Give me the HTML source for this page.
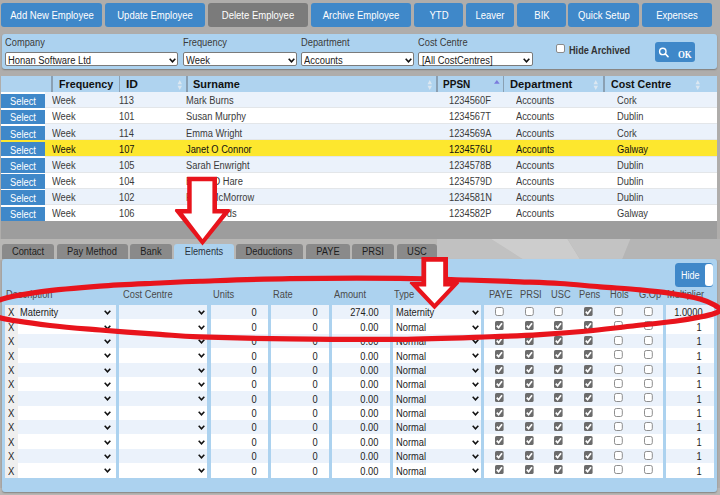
<!DOCTYPE html><html><head><meta charset="utf-8"><style>html,body{margin:0;padding:0;}body{width:720px;height:495px;overflow:hidden;position:relative;background:#afadab;font-family:'Liberation Sans', sans-serif;}</style></head><body>
<svg style="position:absolute;left:0;top:0" width="720" height="495"><rect x="0" y="239" width="720" height="21" fill="#b8b7b5"/><polygon points="437,239 491,239 524,260 437,260" fill="#c1c1c1"/><polygon points="491,239 567.5,239 580.5,260 524,260" fill="#cdcdcd"/><polygon points="567.5,239 630.5,239 622,260 580.5,260" fill="#c3c3c3"/><polygon points="630.5,239 720,239 720,260 622,260" fill="#b5b5b5"/><rect x="0" y="488" width="720" height="7" fill="#b8b7b5"/></svg>
<div style="position:absolute;left:1.00px;top:3.00px;width:101.00px;height:24.00px;background:#3f88c9;border-radius:3px;"></div>
<div style="position:absolute;left:-148.50px;width:400px;text-align:center;top:10.03px;font:400 10px/12px 'Liberation Sans', sans-serif;color:#fff;white-space:nowrap;transform:scaleX(0.95);transform-origin:50% 0;">Add New Employee</div>
<div style="position:absolute;left:105.00px;top:3.00px;width:100.00px;height:24.00px;background:#3f88c9;border-radius:3px;"></div>
<div style="position:absolute;left:-45.00px;width:400px;text-align:center;top:10.03px;font:400 10px/12px 'Liberation Sans', sans-serif;color:#fff;white-space:nowrap;transform:scaleX(0.95);transform-origin:50% 0;">Update Employee</div>
<div style="position:absolute;left:208.00px;top:3.00px;width:100.00px;height:24.00px;background:#7b7b7b;border-radius:3px;"></div>
<div style="position:absolute;left:58.00px;width:400px;text-align:center;top:10.03px;font:400 10px/12px 'Liberation Sans', sans-serif;color:#fff;white-space:nowrap;transform:scaleX(0.95);transform-origin:50% 0;">Delete Employee</div>
<div style="position:absolute;left:311.00px;top:3.00px;width:100.00px;height:24.00px;background:#3f88c9;border-radius:3px;"></div>
<div style="position:absolute;left:161.00px;width:400px;text-align:center;top:10.03px;font:400 10px/12px 'Liberation Sans', sans-serif;color:#fff;white-space:nowrap;transform:scaleX(0.95);transform-origin:50% 0;">Archive Employee</div>
<div style="position:absolute;left:414.00px;top:3.00px;width:49.00px;height:24.00px;background:#3f88c9;border-radius:3px;"></div>
<div style="position:absolute;left:238.50px;width:400px;text-align:center;top:10.03px;font:400 10px/12px 'Liberation Sans', sans-serif;color:#fff;white-space:nowrap;transform:scaleX(0.95);transform-origin:50% 0;">YTD</div>
<div style="position:absolute;left:466.00px;top:3.00px;width:48.00px;height:24.00px;background:#3f88c9;border-radius:3px;"></div>
<div style="position:absolute;left:290.00px;width:400px;text-align:center;top:10.03px;font:400 10px/12px 'Liberation Sans', sans-serif;color:#fff;white-space:nowrap;transform:scaleX(0.95);transform-origin:50% 0;">Leaver</div>
<div style="position:absolute;left:517.00px;top:3.00px;width:49.00px;height:24.00px;background:#3f88c9;border-radius:3px;"></div>
<div style="position:absolute;left:341.50px;width:400px;text-align:center;top:10.03px;font:400 10px/12px 'Liberation Sans', sans-serif;color:#fff;white-space:nowrap;transform:scaleX(0.95);transform-origin:50% 0;">BIK</div>
<div style="position:absolute;left:568.00px;top:3.00px;width:71.00px;height:24.00px;background:#3f88c9;border-radius:3px;"></div>
<div style="position:absolute;left:403.50px;width:400px;text-align:center;top:10.03px;font:400 10px/12px 'Liberation Sans', sans-serif;color:#fff;white-space:nowrap;transform:scaleX(0.95);transform-origin:50% 0;">Quick Setup</div>
<div style="position:absolute;left:642.00px;top:3.00px;width:70.00px;height:24.00px;background:#3f88c9;border-radius:3px;"></div>
<div style="position:absolute;left:477.00px;width:400px;text-align:center;top:10.03px;font:400 10px/12px 'Liberation Sans', sans-serif;color:#fff;white-space:nowrap;transform:scaleX(0.95);transform-origin:50% 0;">Expenses</div>
<div style="position:absolute;left:1.50px;top:34.30px;width:715.50px;height:34.50px;background:#acd2ef;border-radius:3px;box-shadow:0 1px 1.5px rgba(0,0,0,.28);"></div>
<div style="position:absolute;left:5.00px;top:36.83px;font:400 10px/12px 'Liberation Sans', sans-serif;color:#3a3a3a;white-space:nowrap;transform:scaleX(0.93);transform-origin:0 0;">Company</div>
<div style="position:absolute;left:182.50px;top:36.83px;font:400 10px/12px 'Liberation Sans', sans-serif;color:#3a3a3a;white-space:nowrap;transform:scaleX(0.93);transform-origin:0 0;">Frequency</div>
<div style="position:absolute;left:300.80px;top:36.83px;font:400 10px/12px 'Liberation Sans', sans-serif;color:#3a3a3a;white-space:nowrap;transform:scaleX(0.93);transform-origin:0 0;">Department</div>
<div style="position:absolute;left:418.20px;top:36.83px;font:400 10px/12px 'Liberation Sans', sans-serif;color:#3a3a3a;white-space:nowrap;transform:scaleX(0.93);transform-origin:0 0;">Cost Centre</div>
<div style="position:absolute;left:4.70px;top:52.30px;width:173.80px;height:14.10px;background:#fff;box-sizing:border-box;border:1px solid #7a7a7a;border-radius:2px;"></div>
<div style="position:absolute;left:8.30px;top:54.63px;font:400 10px/12px 'Liberation Sans', sans-serif;color:#222;white-space:nowrap;transform:scaleX(0.94);transform-origin:0 0;">Honan Software Ltd</div>
<svg width="7" height="5" viewBox="0 0 7 5" style="position:absolute;left:169.30px;top:57.50px"><path d="M0.7 0.8 L3.5 3.8 L6.3 0.8" fill="none" stroke="#111" stroke-width="1.6"/></svg>
<div style="position:absolute;left:182.50px;top:52.30px;width:114.20px;height:14.10px;background:#fff;box-sizing:border-box;border:1px solid #7a7a7a;border-radius:2px;"></div>
<div style="position:absolute;left:186.10px;top:54.63px;font:400 10px/12px 'Liberation Sans', sans-serif;color:#222;white-space:nowrap;transform:scaleX(0.94);transform-origin:0 0;">Week</div>
<svg width="7" height="5" viewBox="0 0 7 5" style="position:absolute;left:287.50px;top:57.50px"><path d="M0.7 0.8 L3.5 3.8 L6.3 0.8" fill="none" stroke="#111" stroke-width="1.6"/></svg>
<div style="position:absolute;left:300.80px;top:52.30px;width:113.70px;height:14.10px;background:#fff;box-sizing:border-box;border:1px solid #7a7a7a;border-radius:2px;"></div>
<div style="position:absolute;left:304.40px;top:54.63px;font:400 10px/12px 'Liberation Sans', sans-serif;color:#222;white-space:nowrap;transform:scaleX(0.94);transform-origin:0 0;">Accounts</div>
<svg width="7" height="5" viewBox="0 0 7 5" style="position:absolute;left:405.30px;top:57.50px"><path d="M0.7 0.8 L3.5 3.8 L6.3 0.8" fill="none" stroke="#111" stroke-width="1.6"/></svg>
<div style="position:absolute;left:418.20px;top:52.30px;width:114.40px;height:14.10px;background:#fff;box-sizing:border-box;border:1px solid #7a7a7a;border-radius:2px;"></div>
<div style="position:absolute;left:421.80px;top:54.63px;font:400 10px/12px 'Liberation Sans', sans-serif;color:#222;white-space:nowrap;transform:scaleX(0.94);transform-origin:0 0;">[All CostCentres]</div>
<svg width="7" height="5" viewBox="0 0 7 5" style="position:absolute;left:523.40px;top:57.50px"><path d="M0.7 0.8 L3.5 3.8 L6.3 0.8" fill="none" stroke="#111" stroke-width="1.6"/></svg>
<div style="position:absolute;left:556.30px;top:44.40px;width:8.70px;height:8.70px;background:#fff;box-sizing:border-box;border:1px solid #8a8a8a;border-radius:2px;"></div>
<div style="position:absolute;left:568.75px;top:44.83px;font:700 10px/12px 'Liberation Sans', sans-serif;color:#333;white-space:nowrap;transform:scaleX(0.915);transform-origin:0 0;">Hide Archived</div>
<div style="position:absolute;left:655.00px;top:42.20px;width:40.00px;height:20.20px;background:#3f88c9;border-radius:3px;"></div>
<svg style="position:absolute;left:655px;top:42px" width="40" height="21"><circle cx="7.8" cy="9.4" r="3.2" fill="none" stroke="#fff" stroke-width="1.4"/><path d="M10.2 11.8 L13 14.6" stroke="#fff" stroke-width="1.6" stroke-linecap="round"/></svg>
<div style="position:absolute;left:677.50px;top:48.26px;font:700 10.5px/13px 'Liberation Serif', serif;color:#fff;white-space:nowrap;transform:scaleX(0.84);transform-origin:0 0;">OK</div>
<div style="position:absolute;left:1.20px;top:76.00px;width:716.00px;height:163.40px;background:#9d9d9d;"></div>
<div style="position:absolute;left:1.20px;top:76.00px;width:716.00px;height:15.70px;background:#afd3ef;"></div>
<div style="position:absolute;left:51.40px;top:76.00px;width:1.50px;height:15.70px;background:#8aa0b3;"></div>
<div style="position:absolute;left:118.90px;top:76.00px;width:1.50px;height:15.70px;background:#8aa0b3;"></div>
<div style="position:absolute;left:186.00px;top:76.00px;width:1.50px;height:15.70px;background:#8aa0b3;"></div>
<div style="position:absolute;left:436.00px;top:76.00px;width:1.50px;height:15.70px;background:#8aa0b3;"></div>
<div style="position:absolute;left:502.80px;top:76.00px;width:1.50px;height:15.70px;background:#8aa0b3;"></div>
<div style="position:absolute;left:603.30px;top:76.00px;width:1.50px;height:15.70px;background:#8aa0b3;"></div>
<div style="position:absolute;left:58.75px;top:78.63px;font:700 10px/12px 'Liberation Sans', sans-serif;color:#111;white-space:nowrap;transform:scaleX(1.07);transform-origin:0 0;">Frequency</div>
<div style="position:absolute;left:126.10px;top:78.63px;font:700 10px/12px 'Liberation Sans', sans-serif;color:#111;white-space:nowrap;transform:scaleX(1.2);transform-origin:0 0;">ID</div>
<div style="position:absolute;left:192.70px;top:78.63px;font:700 10px/12px 'Liberation Sans', sans-serif;color:#111;white-space:nowrap;transform:scaleX(1.095);transform-origin:0 0;">Surname</div>
<div style="position:absolute;left:443.10px;top:78.63px;font:700 10px/12px 'Liberation Sans', sans-serif;color:#111;white-space:nowrap;transform:scaleX(1.0);transform-origin:0 0;">PPSN</div>
<div style="position:absolute;left:510.30px;top:78.63px;font:700 10px/12px 'Liberation Sans', sans-serif;color:#111;white-space:nowrap;transform:scaleX(1.12);transform-origin:0 0;">Department</div>
<div style="position:absolute;left:610.70px;top:78.63px;font:700 10px/12px 'Liberation Sans', sans-serif;color:#111;white-space:nowrap;transform:scaleX(1.063);transform-origin:0 0;">Cost Centre</div>
<svg style="position:absolute;left:176.50px;top:79.5px" width="6" height="10"><path d="M0.5 4.3 L2.75 0 L5 4.3Z M0.5 5.7 L2.75 10 L5 5.7Z" fill="#dbe7f1"/></svg>
<svg style="position:absolute;left:427.00px;top:79.5px" width="6" height="10"><path d="M0.5 4.3 L2.75 0 L5 4.3Z M0.5 5.7 L2.75 10 L5 5.7Z" fill="#dbe7f1"/></svg>
<svg style="position:absolute;left:593.00px;top:79.5px" width="6" height="10"><path d="M0.5 4.3 L2.75 0 L5 4.3Z M0.5 5.7 L2.75 10 L5 5.7Z" fill="#dbe7f1"/></svg>
<svg style="position:absolute;left:695.00px;top:79.5px" width="6" height="10"><path d="M0.5 4.3 L2.75 0 L5 4.3Z M0.5 5.7 L2.75 10 L5 5.7Z" fill="#dbe7f1"/></svg>
<svg style="position:absolute;left:493.7px;top:80px" width="6" height="4"><path d="M0 3.8 L2.85 0 L5.7 3.8Z" fill="#7b7bdd"/></svg>
<div style="position:absolute;left:1.20px;top:92.00px;width:716.00px;height:16.16px;background:#e3e6e9;"></div>
<div style="position:absolute;left:1.20px;top:92.00px;width:716.00px;height:15.06px;background:#ebf2fb;"></div>
<div style="position:absolute;left:1.20px;top:92.00px;width:43.70px;height:16.16px;background:#ffffff;"></div>
<div style="position:absolute;left:1.20px;top:93.50px;width:43.70px;height:14.46px;background:#3f88c9;"></div>
<div style="position:absolute;left:-176.95px;width:400px;text-align:center;top:96.23px;font:400 10px/12px 'Liberation Sans', sans-serif;color:#fff;white-space:nowrap;transform:scaleX(0.93);transform-origin:50% 0;">Select</div>
<div style="position:absolute;left:51.70px;top:95.33px;font:400 10px/12px 'Liberation Sans', sans-serif;color:#3a3a3a;white-space:nowrap;transform:scaleX(0.93);transform-origin:0 0;">Week</div>
<div style="position:absolute;left:119.00px;top:95.33px;font:400 10px/12px 'Liberation Sans', sans-serif;color:#3a3a3a;white-space:nowrap;transform:scaleX(0.93);transform-origin:0 0;">113</div>
<div style="position:absolute;left:185.70px;top:95.33px;font:400 10px/12px 'Liberation Sans', sans-serif;color:#3a3a3a;white-space:nowrap;transform:scaleX(0.93);transform-origin:0 0;">Mark Burns</div>
<div style="position:absolute;left:449.30px;top:95.33px;font:400 10px/12px 'Liberation Sans', sans-serif;color:#3a3a3a;white-space:nowrap;transform:scaleX(0.93);transform-origin:0 0;">1234560F</div>
<div style="position:absolute;left:516.00px;top:95.33px;font:400 10px/12px 'Liberation Sans', sans-serif;color:#3a3a3a;white-space:nowrap;transform:scaleX(0.93);transform-origin:0 0;">Accounts</div>
<div style="position:absolute;left:616.70px;top:95.33px;font:400 10px/12px 'Liberation Sans', sans-serif;color:#3a3a3a;white-space:nowrap;transform:scaleX(0.93);transform-origin:0 0;">Cork</div>
<div style="position:absolute;left:1.20px;top:108.16px;width:716.00px;height:16.16px;background:#e3e6e9;"></div>
<div style="position:absolute;left:1.20px;top:108.16px;width:716.00px;height:15.06px;background:#ffffff;"></div>
<div style="position:absolute;left:1.20px;top:108.16px;width:43.70px;height:16.16px;background:#ffffff;"></div>
<div style="position:absolute;left:1.20px;top:109.66px;width:43.70px;height:14.46px;background:#3f88c9;"></div>
<div style="position:absolute;left:-176.95px;width:400px;text-align:center;top:112.39px;font:400 10px/12px 'Liberation Sans', sans-serif;color:#fff;white-space:nowrap;transform:scaleX(0.93);transform-origin:50% 0;">Select</div>
<div style="position:absolute;left:51.70px;top:111.49px;font:400 10px/12px 'Liberation Sans', sans-serif;color:#3a3a3a;white-space:nowrap;transform:scaleX(0.93);transform-origin:0 0;">Week</div>
<div style="position:absolute;left:119.00px;top:111.49px;font:400 10px/12px 'Liberation Sans', sans-serif;color:#3a3a3a;white-space:nowrap;transform:scaleX(0.93);transform-origin:0 0;">101</div>
<div style="position:absolute;left:185.70px;top:111.49px;font:400 10px/12px 'Liberation Sans', sans-serif;color:#3a3a3a;white-space:nowrap;transform:scaleX(0.93);transform-origin:0 0;">Susan Murphy</div>
<div style="position:absolute;left:449.30px;top:111.49px;font:400 10px/12px 'Liberation Sans', sans-serif;color:#3a3a3a;white-space:nowrap;transform:scaleX(0.93);transform-origin:0 0;">1234567T</div>
<div style="position:absolute;left:516.00px;top:111.49px;font:400 10px/12px 'Liberation Sans', sans-serif;color:#3a3a3a;white-space:nowrap;transform:scaleX(0.93);transform-origin:0 0;">Accounts</div>
<div style="position:absolute;left:616.70px;top:111.49px;font:400 10px/12px 'Liberation Sans', sans-serif;color:#3a3a3a;white-space:nowrap;transform:scaleX(0.93);transform-origin:0 0;">Dublin</div>
<div style="position:absolute;left:1.20px;top:124.32px;width:716.00px;height:16.16px;background:#e3e6e9;"></div>
<div style="position:absolute;left:1.20px;top:124.32px;width:716.00px;height:15.06px;background:#ebf2fb;"></div>
<div style="position:absolute;left:1.20px;top:124.32px;width:43.70px;height:16.16px;background:#ffffff;"></div>
<div style="position:absolute;left:1.20px;top:125.82px;width:43.70px;height:14.46px;background:#3f88c9;"></div>
<div style="position:absolute;left:-176.95px;width:400px;text-align:center;top:128.55px;font:400 10px/12px 'Liberation Sans', sans-serif;color:#fff;white-space:nowrap;transform:scaleX(0.93);transform-origin:50% 0;">Select</div>
<div style="position:absolute;left:51.70px;top:127.65px;font:400 10px/12px 'Liberation Sans', sans-serif;color:#3a3a3a;white-space:nowrap;transform:scaleX(0.93);transform-origin:0 0;">Week</div>
<div style="position:absolute;left:119.00px;top:127.65px;font:400 10px/12px 'Liberation Sans', sans-serif;color:#3a3a3a;white-space:nowrap;transform:scaleX(0.93);transform-origin:0 0;">114</div>
<div style="position:absolute;left:185.70px;top:127.65px;font:400 10px/12px 'Liberation Sans', sans-serif;color:#3a3a3a;white-space:nowrap;transform:scaleX(0.93);transform-origin:0 0;">Emma Wright</div>
<div style="position:absolute;left:449.30px;top:127.65px;font:400 10px/12px 'Liberation Sans', sans-serif;color:#3a3a3a;white-space:nowrap;transform:scaleX(0.93);transform-origin:0 0;">1234569A</div>
<div style="position:absolute;left:516.00px;top:127.65px;font:400 10px/12px 'Liberation Sans', sans-serif;color:#3a3a3a;white-space:nowrap;transform:scaleX(0.93);transform-origin:0 0;">Accounts</div>
<div style="position:absolute;left:616.70px;top:127.65px;font:400 10px/12px 'Liberation Sans', sans-serif;color:#3a3a3a;white-space:nowrap;transform:scaleX(0.93);transform-origin:0 0;">Cork</div>
<div style="position:absolute;left:1.20px;top:140.48px;width:716.00px;height:16.16px;background:#e3e6e9;"></div>
<div style="position:absolute;left:1.20px;top:140.48px;width:716.00px;height:15.06px;background:#fde72e;"></div>
<div style="position:absolute;left:1.20px;top:140.48px;width:43.70px;height:16.16px;background:#ffffff;"></div>
<div style="position:absolute;left:1.20px;top:140.48px;width:43.70px;height:1.60px;background:#fde72e;"></div>
<div style="position:absolute;left:1.20px;top:141.98px;width:43.70px;height:14.46px;background:#3f88c9;"></div>
<div style="position:absolute;left:-176.95px;width:400px;text-align:center;top:144.71px;font:400 10px/12px 'Liberation Sans', sans-serif;color:#fff;white-space:nowrap;transform:scaleX(0.93);transform-origin:50% 0;">Select</div>
<div style="position:absolute;left:51.70px;top:143.81px;font:400 10px/12px 'Liberation Sans', sans-serif;color:#111;white-space:nowrap;transform:scaleX(0.93);transform-origin:0 0;">Week</div>
<div style="position:absolute;left:119.00px;top:143.81px;font:400 10px/12px 'Liberation Sans', sans-serif;color:#111;white-space:nowrap;transform:scaleX(0.93);transform-origin:0 0;">107</div>
<div style="position:absolute;left:185.70px;top:143.81px;font:400 10px/12px 'Liberation Sans', sans-serif;color:#111;white-space:nowrap;transform:scaleX(0.93);transform-origin:0 0;">Janet O Connor</div>
<div style="position:absolute;left:449.30px;top:143.81px;font:400 10px/12px 'Liberation Sans', sans-serif;color:#111;white-space:nowrap;transform:scaleX(0.93);transform-origin:0 0;">1234576U</div>
<div style="position:absolute;left:516.00px;top:143.81px;font:400 10px/12px 'Liberation Sans', sans-serif;color:#111;white-space:nowrap;transform:scaleX(0.93);transform-origin:0 0;">Accounts</div>
<div style="position:absolute;left:616.70px;top:143.81px;font:400 10px/12px 'Liberation Sans', sans-serif;color:#111;white-space:nowrap;transform:scaleX(0.93);transform-origin:0 0;">Galway</div>
<div style="position:absolute;left:1.20px;top:156.64px;width:716.00px;height:16.16px;background:#e3e6e9;"></div>
<div style="position:absolute;left:1.20px;top:156.64px;width:716.00px;height:15.06px;background:#ebf2fb;"></div>
<div style="position:absolute;left:1.20px;top:156.64px;width:43.70px;height:16.16px;background:#ffffff;"></div>
<div style="position:absolute;left:1.20px;top:158.14px;width:43.70px;height:14.46px;background:#3f88c9;"></div>
<div style="position:absolute;left:-176.95px;width:400px;text-align:center;top:160.87px;font:400 10px/12px 'Liberation Sans', sans-serif;color:#fff;white-space:nowrap;transform:scaleX(0.93);transform-origin:50% 0;">Select</div>
<div style="position:absolute;left:51.70px;top:159.97px;font:400 10px/12px 'Liberation Sans', sans-serif;color:#3a3a3a;white-space:nowrap;transform:scaleX(0.93);transform-origin:0 0;">Week</div>
<div style="position:absolute;left:119.00px;top:159.97px;font:400 10px/12px 'Liberation Sans', sans-serif;color:#3a3a3a;white-space:nowrap;transform:scaleX(0.93);transform-origin:0 0;">105</div>
<div style="position:absolute;left:185.70px;top:159.97px;font:400 10px/12px 'Liberation Sans', sans-serif;color:#3a3a3a;white-space:nowrap;transform:scaleX(0.93);transform-origin:0 0;">Sarah Enwright</div>
<div style="position:absolute;left:449.30px;top:159.97px;font:400 10px/12px 'Liberation Sans', sans-serif;color:#3a3a3a;white-space:nowrap;transform:scaleX(0.93);transform-origin:0 0;">1234578B</div>
<div style="position:absolute;left:516.00px;top:159.97px;font:400 10px/12px 'Liberation Sans', sans-serif;color:#3a3a3a;white-space:nowrap;transform:scaleX(0.93);transform-origin:0 0;">Accounts</div>
<div style="position:absolute;left:616.70px;top:159.97px;font:400 10px/12px 'Liberation Sans', sans-serif;color:#3a3a3a;white-space:nowrap;transform:scaleX(0.93);transform-origin:0 0;">Dublin</div>
<div style="position:absolute;left:1.20px;top:172.80px;width:716.00px;height:16.16px;background:#e3e6e9;"></div>
<div style="position:absolute;left:1.20px;top:172.80px;width:716.00px;height:15.06px;background:#ffffff;"></div>
<div style="position:absolute;left:1.20px;top:172.80px;width:43.70px;height:16.16px;background:#ffffff;"></div>
<div style="position:absolute;left:1.20px;top:174.30px;width:43.70px;height:14.46px;background:#3f88c9;"></div>
<div style="position:absolute;left:-176.95px;width:400px;text-align:center;top:177.03px;font:400 10px/12px 'Liberation Sans', sans-serif;color:#fff;white-space:nowrap;transform:scaleX(0.93);transform-origin:50% 0;">Select</div>
<div style="position:absolute;left:51.70px;top:176.13px;font:400 10px/12px 'Liberation Sans', sans-serif;color:#3a3a3a;white-space:nowrap;transform:scaleX(0.93);transform-origin:0 0;">Week</div>
<div style="position:absolute;left:119.00px;top:176.13px;font:400 10px/12px 'Liberation Sans', sans-serif;color:#3a3a3a;white-space:nowrap;transform:scaleX(0.93);transform-origin:0 0;">104</div>
<div style="position:absolute;left:185.70px;top:176.13px;font:400 10px/12px 'Liberation Sans', sans-serif;color:#3a3a3a;white-space:nowrap;transform:scaleX(0.93);transform-origin:0 0;">Bryan O Hare</div>
<div style="position:absolute;left:449.30px;top:176.13px;font:400 10px/12px 'Liberation Sans', sans-serif;color:#3a3a3a;white-space:nowrap;transform:scaleX(0.93);transform-origin:0 0;">1234579D</div>
<div style="position:absolute;left:516.00px;top:176.13px;font:400 10px/12px 'Liberation Sans', sans-serif;color:#3a3a3a;white-space:nowrap;transform:scaleX(0.93);transform-origin:0 0;">Accounts</div>
<div style="position:absolute;left:616.70px;top:176.13px;font:400 10px/12px 'Liberation Sans', sans-serif;color:#3a3a3a;white-space:nowrap;transform:scaleX(0.93);transform-origin:0 0;">Dublin</div>
<div style="position:absolute;left:1.20px;top:188.96px;width:716.00px;height:16.16px;background:#e3e6e9;"></div>
<div style="position:absolute;left:1.20px;top:188.96px;width:716.00px;height:15.06px;background:#ebf2fb;"></div>
<div style="position:absolute;left:1.20px;top:188.96px;width:43.70px;height:16.16px;background:#ffffff;"></div>
<div style="position:absolute;left:1.20px;top:190.46px;width:43.70px;height:14.46px;background:#3f88c9;"></div>
<div style="position:absolute;left:-176.95px;width:400px;text-align:center;top:193.19px;font:400 10px/12px 'Liberation Sans', sans-serif;color:#fff;white-space:nowrap;transform:scaleX(0.93);transform-origin:50% 0;">Select</div>
<div style="position:absolute;left:51.70px;top:192.29px;font:400 10px/12px 'Liberation Sans', sans-serif;color:#3a3a3a;white-space:nowrap;transform:scaleX(0.93);transform-origin:0 0;">Week</div>
<div style="position:absolute;left:119.00px;top:192.29px;font:400 10px/12px 'Liberation Sans', sans-serif;color:#3a3a3a;white-space:nowrap;transform:scaleX(0.93);transform-origin:0 0;">102</div>
<div style="position:absolute;left:185.70px;top:192.29px;font:400 10px/12px 'Liberation Sans', sans-serif;color:#3a3a3a;white-space:nowrap;transform:scaleX(0.93);transform-origin:0 0;">Peter McMorrow</div>
<div style="position:absolute;left:449.30px;top:192.29px;font:400 10px/12px 'Liberation Sans', sans-serif;color:#3a3a3a;white-space:nowrap;transform:scaleX(0.93);transform-origin:0 0;">1234581N</div>
<div style="position:absolute;left:516.00px;top:192.29px;font:400 10px/12px 'Liberation Sans', sans-serif;color:#3a3a3a;white-space:nowrap;transform:scaleX(0.93);transform-origin:0 0;">Accounts</div>
<div style="position:absolute;left:616.70px;top:192.29px;font:400 10px/12px 'Liberation Sans', sans-serif;color:#3a3a3a;white-space:nowrap;transform:scaleX(0.93);transform-origin:0 0;">Dublin</div>
<div style="position:absolute;left:1.20px;top:205.12px;width:716.00px;height:16.16px;background:#ffffff;"></div>
<div style="position:absolute;left:1.20px;top:205.12px;width:716.00px;height:15.06px;background:#ffffff;"></div>
<div style="position:absolute;left:1.20px;top:205.12px;width:43.70px;height:16.16px;background:#ffffff;"></div>
<div style="position:absolute;left:1.20px;top:206.62px;width:43.70px;height:14.46px;background:#3f88c9;"></div>
<div style="position:absolute;left:-176.95px;width:400px;text-align:center;top:209.35px;font:400 10px/12px 'Liberation Sans', sans-serif;color:#fff;white-space:nowrap;transform:scaleX(0.93);transform-origin:50% 0;">Select</div>
<div style="position:absolute;left:51.70px;top:208.45px;font:400 10px/12px 'Liberation Sans', sans-serif;color:#3a3a3a;white-space:nowrap;transform:scaleX(0.93);transform-origin:0 0;">Week</div>
<div style="position:absolute;left:119.00px;top:208.45px;font:400 10px/12px 'Liberation Sans', sans-serif;color:#3a3a3a;white-space:nowrap;transform:scaleX(0.93);transform-origin:0 0;">106</div>
<div style="position:absolute;left:185.70px;top:208.45px;font:400 10px/12px 'Liberation Sans', sans-serif;color:#3a3a3a;white-space:nowrap;transform:scaleX(0.93);transform-origin:0 0;">Liz Edwards</div>
<div style="position:absolute;left:449.30px;top:208.45px;font:400 10px/12px 'Liberation Sans', sans-serif;color:#3a3a3a;white-space:nowrap;transform:scaleX(0.93);transform-origin:0 0;">1234582P</div>
<div style="position:absolute;left:516.00px;top:208.45px;font:400 10px/12px 'Liberation Sans', sans-serif;color:#3a3a3a;white-space:nowrap;transform:scaleX(0.93);transform-origin:0 0;">Accounts</div>
<div style="position:absolute;left:616.70px;top:208.45px;font:400 10px/12px 'Liberation Sans', sans-serif;color:#3a3a3a;white-space:nowrap;transform:scaleX(0.93);transform-origin:0 0;">Galway</div>
<div style="position:absolute;left:1.70px;top:243.80px;width:52.80px;height:14.80px;background:#8a8a8a;border-radius:3px 3px 0 0;"></div>
<div style="position:absolute;left:-171.90px;width:400px;text-align:center;top:246.23px;font:400 10px/12px 'Liberation Sans', sans-serif;color:#1e1e1e;white-space:nowrap;transform:scaleX(0.935);transform-origin:50% 0;">Contact</div>
<div style="position:absolute;left:56.70px;top:243.80px;width:71.00px;height:14.80px;background:#8a8a8a;border-radius:3px 3px 0 0;"></div>
<div style="position:absolute;left:-107.80px;width:400px;text-align:center;top:246.23px;font:400 10px/12px 'Liberation Sans', sans-serif;color:#1e1e1e;white-space:nowrap;transform:scaleX(0.935);transform-origin:50% 0;">Pay Method</div>
<div style="position:absolute;left:130.00px;top:243.80px;width:42.20px;height:14.80px;background:#8a8a8a;border-radius:3px 3px 0 0;"></div>
<div style="position:absolute;left:-48.90px;width:400px;text-align:center;top:246.23px;font:400 10px/12px 'Liberation Sans', sans-serif;color:#1e1e1e;white-space:nowrap;transform:scaleX(0.935);transform-origin:50% 0;">Bank</div>
<div style="position:absolute;left:173.80px;top:243.60px;width:59.90px;height:18.40px;background:#acd2ef;border-radius:3px 3px 0 0;"></div>
<div style="position:absolute;left:3.75px;width:400px;text-align:center;top:246.23px;font:400 10px/12px 'Liberation Sans', sans-serif;color:#2a3340;white-space:nowrap;transform:scaleX(0.92);transform-origin:50% 0;">Elements</div>
<div style="position:absolute;left:235.60px;top:243.80px;width:67.70px;height:14.80px;background:#8a8a8a;border-radius:3px 3px 0 0;"></div>
<div style="position:absolute;left:69.45px;width:400px;text-align:center;top:246.23px;font:400 10px/12px 'Liberation Sans', sans-serif;color:#1e1e1e;white-space:nowrap;transform:scaleX(0.935);transform-origin:50% 0;">Deductions</div>
<div style="position:absolute;left:305.70px;top:243.80px;width:44.30px;height:14.80px;background:#8a8a8a;border-radius:3px 3px 0 0;"></div>
<div style="position:absolute;left:127.85px;width:400px;text-align:center;top:246.23px;font:400 10px/12px 'Liberation Sans', sans-serif;color:#1e1e1e;white-space:nowrap;transform:scaleX(0.935);transform-origin:50% 0;">PAYE</div>
<div style="position:absolute;left:352.30px;top:243.80px;width:42.00px;height:14.80px;background:#8a8a8a;border-radius:3px 3px 0 0;"></div>
<div style="position:absolute;left:173.30px;width:400px;text-align:center;top:246.23px;font:400 10px/12px 'Liberation Sans', sans-serif;color:#1e1e1e;white-space:nowrap;transform:scaleX(0.935);transform-origin:50% 0;">PRSI</div>
<div style="position:absolute;left:396.70px;top:243.80px;width:40.60px;height:14.80px;background:#8a8a8a;border-radius:3px 3px 0 0;"></div>
<div style="position:absolute;left:217.00px;width:400px;text-align:center;top:246.23px;font:400 10px/12px 'Liberation Sans', sans-serif;color:#1e1e1e;white-space:nowrap;transform:scaleX(0.935);transform-origin:50% 0;">USC</div>
<div style="position:absolute;left:1.70px;top:259.20px;width:715.80px;height:232.50px;background:#acd2ef;border-radius:3px;box-shadow:0 1px 1.5px rgba(0,0,0,.28);"></div>
<div style="position:absolute;left:674.60px;top:262.90px;width:38.70px;height:24.20px;background:#3f88c9;border-radius:3.5px;"></div>
<div style="position:absolute;left:705.00px;top:263.80px;width:7.90px;height:22.40px;background:#fff;border-radius:3px;"></div>
<div style="position:absolute;left:681.00px;top:270.08px;font:400 10px/12px 'Liberation Sans', sans-serif;color:#fff;white-space:nowrap;transform:scaleX(0.9);transform-origin:0 0;">Hide</div>
<div style="position:absolute;left:5.50px;top:289.03px;font:400 10px/12px 'Liberation Sans', sans-serif;color:#4a4a4a;white-space:nowrap;transform:scaleX(0.93);transform-origin:0 0;">Description</div>
<div style="position:absolute;left:122.70px;top:289.03px;font:400 10px/12px 'Liberation Sans', sans-serif;color:#4a4a4a;white-space:nowrap;transform:scaleX(0.93);transform-origin:0 0;">Cost Centre</div>
<div style="position:absolute;left:213.30px;top:289.03px;font:400 10px/12px 'Liberation Sans', sans-serif;color:#4a4a4a;white-space:nowrap;transform:scaleX(0.93);transform-origin:0 0;">Units</div>
<div style="position:absolute;left:273.30px;top:289.03px;font:400 10px/12px 'Liberation Sans', sans-serif;color:#4a4a4a;white-space:nowrap;transform:scaleX(0.93);transform-origin:0 0;">Rate</div>
<div style="position:absolute;left:334.00px;top:289.03px;font:400 10px/12px 'Liberation Sans', sans-serif;color:#4a4a4a;white-space:nowrap;transform:scaleX(0.93);transform-origin:0 0;">Amount</div>
<div style="position:absolute;left:394.00px;top:289.03px;font:400 10px/12px 'Liberation Sans', sans-serif;color:#4a4a4a;white-space:nowrap;transform:scaleX(0.93);transform-origin:0 0;">Type</div>
<div style="position:absolute;left:489.00px;top:289.03px;font:400 10px/12px 'Liberation Sans', sans-serif;color:#4a4a4a;white-space:nowrap;transform:scaleX(0.93);transform-origin:0 0;">PAYE</div>
<div style="position:absolute;left:520.00px;top:289.03px;font:400 10px/12px 'Liberation Sans', sans-serif;color:#4a4a4a;white-space:nowrap;transform:scaleX(0.93);transform-origin:0 0;">PRSI</div>
<div style="position:absolute;left:550.70px;top:289.03px;font:400 10px/12px 'Liberation Sans', sans-serif;color:#4a4a4a;white-space:nowrap;transform:scaleX(0.93);transform-origin:0 0;">USC</div>
<div style="position:absolute;left:579.30px;top:289.03px;font:400 10px/12px 'Liberation Sans', sans-serif;color:#4a4a4a;white-space:nowrap;transform:scaleX(0.93);transform-origin:0 0;">Pens</div>
<div style="position:absolute;left:610.00px;top:289.03px;font:400 10px/12px 'Liberation Sans', sans-serif;color:#4a4a4a;white-space:nowrap;transform:scaleX(0.93);transform-origin:0 0;">Hols</div>
<div style="position:absolute;left:639.30px;top:289.03px;font:400 10px/12px 'Liberation Sans', sans-serif;color:#4a4a4a;white-space:nowrap;transform:scaleX(0.93);transform-origin:0 0;">G.Op</div>
<div style="position:absolute;left:666.70px;top:289.03px;font:400 10px/12px 'Liberation Sans', sans-serif;color:#4a4a4a;white-space:nowrap;transform:scaleX(0.93);transform-origin:0 0;">Multiplier</div>
<div style="position:absolute;left:5.00px;top:305.00px;width:709.20px;height:172.50px;background:#ffffff;"></div>
<div style="position:absolute;left:5.00px;top:305.00px;width:709.20px;height:14.38px;background:#ebf2fb;"></div>
<div style="position:absolute;left:5.00px;top:333.75px;width:709.20px;height:14.38px;background:#ebf2fb;"></div>
<div style="position:absolute;left:5.00px;top:362.50px;width:709.20px;height:14.38px;background:#ebf2fb;"></div>
<div style="position:absolute;left:5.00px;top:391.25px;width:709.20px;height:14.38px;background:#ebf2fb;"></div>
<div style="position:absolute;left:5.00px;top:420.00px;width:709.20px;height:14.38px;background:#ebf2fb;"></div>
<div style="position:absolute;left:5.00px;top:448.75px;width:709.20px;height:14.38px;background:#ebf2fb;"></div>
<div style="position:absolute;left:5.00px;top:305.00px;width:12.80px;height:172.50px;background:#efefef;"></div>
<div style="position:absolute;left:116.00px;top:305.00px;width:3.20px;height:172.50px;background:#acd2ef;"></div>
<div style="position:absolute;left:207.30px;top:305.00px;width:3.30px;height:172.50px;background:#acd2ef;"></div>
<div style="position:absolute;left:267.80px;top:305.00px;width:3.30px;height:172.50px;background:#acd2ef;"></div>
<div style="position:absolute;left:329.30px;top:305.00px;width:3.00px;height:172.50px;background:#acd2ef;"></div>
<div style="position:absolute;left:390.00px;top:305.00px;width:2.70px;height:172.50px;background:#acd2ef;"></div>
<div style="position:absolute;left:481.00px;top:305.00px;width:2.75px;height:172.50px;background:#acd2ef;"></div>
<div style="position:absolute;left:663.30px;top:305.00px;width:2.90px;height:172.50px;background:#acd2ef;"></div>
<div style="position:absolute;left:7.80px;top:307.43px;font:400 10px/12px 'Liberation Sans', sans-serif;color:#222;white-space:nowrap;transform:scaleX(0.95);transform-origin:0 0;">X</div>
<div style="position:absolute;left:19.60px;top:307.43px;font:400 10px/12px 'Liberation Sans', sans-serif;color:#222;white-space:nowrap;transform:scaleX(0.93);transform-origin:0 0;">Maternity</div>
<svg width="7" height="5" viewBox="0 0 7 5" style="position:absolute;left:104.00px;top:310.20px"><path d="M0.7 0.8 L3.5 3.8 L6.3 0.8" fill="none" stroke="#111" stroke-width="1.6"/></svg>
<svg width="7" height="5" viewBox="0 0 7 5" style="position:absolute;left:198.30px;top:310.20px"><path d="M0.7 0.8 L3.5 3.8 L6.3 0.8" fill="none" stroke="#111" stroke-width="1.6"/></svg>
<div style="position:absolute;right:463.10px;top:307.43px;font:400 10px/12px 'Liberation Sans', sans-serif;color:#222;white-space:nowrap;transform:scaleX(0.93);transform-origin:100% 0;">0</div>
<div style="position:absolute;right:402.70px;top:307.43px;font:400 10px/12px 'Liberation Sans', sans-serif;color:#222;white-space:nowrap;transform:scaleX(0.93);transform-origin:100% 0;">0</div>
<div style="position:absolute;right:341.70px;top:307.43px;font:400 10px/12px 'Liberation Sans', sans-serif;color:#222;white-space:nowrap;transform:scaleX(0.93);transform-origin:100% 0;">274.00</div>
<div style="position:absolute;left:396.00px;top:307.43px;font:400 10px/12px 'Liberation Sans', sans-serif;color:#222;white-space:nowrap;transform:scaleX(0.93);transform-origin:0 0;">Maternity</div>
<svg width="7" height="5" viewBox="0 0 7 5" style="position:absolute;left:472.00px;top:310.20px"><path d="M0.7 0.8 L3.5 3.8 L6.3 0.8" fill="none" stroke="#111" stroke-width="1.6"/></svg>
<div style="position:absolute;right:17.30px;top:307.43px;font:400 10px/12px 'Liberation Sans', sans-serif;color:#222;white-space:nowrap;transform:scaleX(0.93);transform-origin:100% 0;">1.0000</div>
<svg style="position:absolute;left:494.90px;top:307.10px" width="9" height="9"><rect x="0.5" y="0.5" width="7.8" height="8" rx="1.8" fill="#fff" stroke="#8e8e8e" stroke-width="1"/></svg>
<svg style="position:absolute;left:524.60px;top:307.10px" width="9" height="9"><rect x="0.5" y="0.5" width="7.8" height="8" rx="1.8" fill="#fff" stroke="#8e8e8e" stroke-width="1"/></svg>
<svg style="position:absolute;left:554.30px;top:307.10px" width="9" height="9"><rect x="0.5" y="0.5" width="7.8" height="8" rx="1.8" fill="#fff" stroke="#8e8e8e" stroke-width="1"/></svg>
<svg style="position:absolute;left:584.00px;top:307.10px" width="9" height="9"><rect x="0" y="0" width="8.6" height="9" rx="1.6" fill="#6b6b6b"/><path d="M1.8 4.6 L3.6 6.7 L7 2.2" fill="none" stroke="#fff" stroke-width="1.7"/></svg>
<svg style="position:absolute;left:614.20px;top:307.10px" width="9" height="9"><rect x="0.5" y="0.5" width="7.8" height="8" rx="1.8" fill="#fff" stroke="#8e8e8e" stroke-width="1"/></svg>
<svg style="position:absolute;left:644.00px;top:307.10px" width="9" height="9"><rect x="0.5" y="0.5" width="7.8" height="8" rx="1.8" fill="#fff" stroke="#8e8e8e" stroke-width="1"/></svg>
<div style="position:absolute;left:7.80px;top:321.81px;font:400 10px/12px 'Liberation Sans', sans-serif;color:#222;white-space:nowrap;transform:scaleX(0.95);transform-origin:0 0;">X</div>
<svg width="7" height="5" viewBox="0 0 7 5" style="position:absolute;left:104.00px;top:324.57px"><path d="M0.7 0.8 L3.5 3.8 L6.3 0.8" fill="none" stroke="#111" stroke-width="1.6"/></svg>
<svg width="7" height="5" viewBox="0 0 7 5" style="position:absolute;left:198.30px;top:324.57px"><path d="M0.7 0.8 L3.5 3.8 L6.3 0.8" fill="none" stroke="#111" stroke-width="1.6"/></svg>
<div style="position:absolute;right:463.10px;top:321.81px;font:400 10px/12px 'Liberation Sans', sans-serif;color:#222;white-space:nowrap;transform:scaleX(0.93);transform-origin:100% 0;">0</div>
<div style="position:absolute;right:402.70px;top:321.81px;font:400 10px/12px 'Liberation Sans', sans-serif;color:#222;white-space:nowrap;transform:scaleX(0.93);transform-origin:100% 0;">0</div>
<div style="position:absolute;right:341.70px;top:321.81px;font:400 10px/12px 'Liberation Sans', sans-serif;color:#222;white-space:nowrap;transform:scaleX(0.93);transform-origin:100% 0;">0.00</div>
<div style="position:absolute;left:396.00px;top:321.81px;font:400 10px/12px 'Liberation Sans', sans-serif;color:#222;white-space:nowrap;transform:scaleX(0.93);transform-origin:0 0;">Normal</div>
<svg width="7" height="5" viewBox="0 0 7 5" style="position:absolute;left:472.00px;top:324.57px"><path d="M0.7 0.8 L3.5 3.8 L6.3 0.8" fill="none" stroke="#111" stroke-width="1.6"/></svg>
<div style="position:absolute;right:18.30px;top:321.81px;font:400 10px/12px 'Liberation Sans', sans-serif;color:#222;white-space:nowrap;transform:scaleX(0.93);transform-origin:100% 0;">1</div>
<svg style="position:absolute;left:494.90px;top:321.48px" width="9" height="9"><rect x="0" y="0" width="8.6" height="9" rx="1.6" fill="#6b6b6b"/><path d="M1.8 4.6 L3.6 6.7 L7 2.2" fill="none" stroke="#fff" stroke-width="1.7"/></svg>
<svg style="position:absolute;left:524.60px;top:321.48px" width="9" height="9"><rect x="0" y="0" width="8.6" height="9" rx="1.6" fill="#6b6b6b"/><path d="M1.8 4.6 L3.6 6.7 L7 2.2" fill="none" stroke="#fff" stroke-width="1.7"/></svg>
<svg style="position:absolute;left:554.30px;top:321.48px" width="9" height="9"><rect x="0" y="0" width="8.6" height="9" rx="1.6" fill="#6b6b6b"/><path d="M1.8 4.6 L3.6 6.7 L7 2.2" fill="none" stroke="#fff" stroke-width="1.7"/></svg>
<svg style="position:absolute;left:584.00px;top:321.48px" width="9" height="9"><rect x="0" y="0" width="8.6" height="9" rx="1.6" fill="#6b6b6b"/><path d="M1.8 4.6 L3.6 6.7 L7 2.2" fill="none" stroke="#fff" stroke-width="1.7"/></svg>
<svg style="position:absolute;left:614.20px;top:321.48px" width="9" height="9"><rect x="0.5" y="0.5" width="7.8" height="8" rx="1.8" fill="#fff" stroke="#8e8e8e" stroke-width="1"/></svg>
<svg style="position:absolute;left:644.00px;top:321.48px" width="9" height="9"><rect x="0.5" y="0.5" width="7.8" height="8" rx="1.8" fill="#fff" stroke="#8e8e8e" stroke-width="1"/></svg>
<div style="position:absolute;left:7.80px;top:336.18px;font:400 10px/12px 'Liberation Sans', sans-serif;color:#222;white-space:nowrap;transform:scaleX(0.95);transform-origin:0 0;">X</div>
<svg width="7" height="5" viewBox="0 0 7 5" style="position:absolute;left:104.00px;top:338.95px"><path d="M0.7 0.8 L3.5 3.8 L6.3 0.8" fill="none" stroke="#111" stroke-width="1.6"/></svg>
<svg width="7" height="5" viewBox="0 0 7 5" style="position:absolute;left:198.30px;top:338.95px"><path d="M0.7 0.8 L3.5 3.8 L6.3 0.8" fill="none" stroke="#111" stroke-width="1.6"/></svg>
<div style="position:absolute;right:463.10px;top:336.18px;font:400 10px/12px 'Liberation Sans', sans-serif;color:#222;white-space:nowrap;transform:scaleX(0.93);transform-origin:100% 0;">0</div>
<div style="position:absolute;right:402.70px;top:336.18px;font:400 10px/12px 'Liberation Sans', sans-serif;color:#222;white-space:nowrap;transform:scaleX(0.93);transform-origin:100% 0;">0</div>
<div style="position:absolute;right:341.70px;top:336.18px;font:400 10px/12px 'Liberation Sans', sans-serif;color:#222;white-space:nowrap;transform:scaleX(0.93);transform-origin:100% 0;">0.00</div>
<div style="position:absolute;left:396.00px;top:336.18px;font:400 10px/12px 'Liberation Sans', sans-serif;color:#222;white-space:nowrap;transform:scaleX(0.93);transform-origin:0 0;">Normal</div>
<svg width="7" height="5" viewBox="0 0 7 5" style="position:absolute;left:472.00px;top:338.95px"><path d="M0.7 0.8 L3.5 3.8 L6.3 0.8" fill="none" stroke="#111" stroke-width="1.6"/></svg>
<div style="position:absolute;right:18.30px;top:336.18px;font:400 10px/12px 'Liberation Sans', sans-serif;color:#222;white-space:nowrap;transform:scaleX(0.93);transform-origin:100% 0;">1</div>
<svg style="position:absolute;left:494.90px;top:335.85px" width="9" height="9"><rect x="0" y="0" width="8.6" height="9" rx="1.6" fill="#6b6b6b"/><path d="M1.8 4.6 L3.6 6.7 L7 2.2" fill="none" stroke="#fff" stroke-width="1.7"/></svg>
<svg style="position:absolute;left:524.60px;top:335.85px" width="9" height="9"><rect x="0" y="0" width="8.6" height="9" rx="1.6" fill="#6b6b6b"/><path d="M1.8 4.6 L3.6 6.7 L7 2.2" fill="none" stroke="#fff" stroke-width="1.7"/></svg>
<svg style="position:absolute;left:554.30px;top:335.85px" width="9" height="9"><rect x="0" y="0" width="8.6" height="9" rx="1.6" fill="#6b6b6b"/><path d="M1.8 4.6 L3.6 6.7 L7 2.2" fill="none" stroke="#fff" stroke-width="1.7"/></svg>
<svg style="position:absolute;left:584.00px;top:335.85px" width="9" height="9"><rect x="0" y="0" width="8.6" height="9" rx="1.6" fill="#6b6b6b"/><path d="M1.8 4.6 L3.6 6.7 L7 2.2" fill="none" stroke="#fff" stroke-width="1.7"/></svg>
<svg style="position:absolute;left:614.20px;top:335.85px" width="9" height="9"><rect x="0.5" y="0.5" width="7.8" height="8" rx="1.8" fill="#fff" stroke="#8e8e8e" stroke-width="1"/></svg>
<svg style="position:absolute;left:644.00px;top:335.85px" width="9" height="9"><rect x="0.5" y="0.5" width="7.8" height="8" rx="1.8" fill="#fff" stroke="#8e8e8e" stroke-width="1"/></svg>
<div style="position:absolute;left:7.80px;top:350.56px;font:400 10px/12px 'Liberation Sans', sans-serif;color:#222;white-space:nowrap;transform:scaleX(0.95);transform-origin:0 0;">X</div>
<svg width="7" height="5" viewBox="0 0 7 5" style="position:absolute;left:104.00px;top:353.32px"><path d="M0.7 0.8 L3.5 3.8 L6.3 0.8" fill="none" stroke="#111" stroke-width="1.6"/></svg>
<svg width="7" height="5" viewBox="0 0 7 5" style="position:absolute;left:198.30px;top:353.32px"><path d="M0.7 0.8 L3.5 3.8 L6.3 0.8" fill="none" stroke="#111" stroke-width="1.6"/></svg>
<div style="position:absolute;right:463.10px;top:350.56px;font:400 10px/12px 'Liberation Sans', sans-serif;color:#222;white-space:nowrap;transform:scaleX(0.93);transform-origin:100% 0;">0</div>
<div style="position:absolute;right:402.70px;top:350.56px;font:400 10px/12px 'Liberation Sans', sans-serif;color:#222;white-space:nowrap;transform:scaleX(0.93);transform-origin:100% 0;">0</div>
<div style="position:absolute;right:341.70px;top:350.56px;font:400 10px/12px 'Liberation Sans', sans-serif;color:#222;white-space:nowrap;transform:scaleX(0.93);transform-origin:100% 0;">0.00</div>
<div style="position:absolute;left:396.00px;top:350.56px;font:400 10px/12px 'Liberation Sans', sans-serif;color:#222;white-space:nowrap;transform:scaleX(0.93);transform-origin:0 0;">Normal</div>
<svg width="7" height="5" viewBox="0 0 7 5" style="position:absolute;left:472.00px;top:353.32px"><path d="M0.7 0.8 L3.5 3.8 L6.3 0.8" fill="none" stroke="#111" stroke-width="1.6"/></svg>
<div style="position:absolute;right:18.30px;top:350.56px;font:400 10px/12px 'Liberation Sans', sans-serif;color:#222;white-space:nowrap;transform:scaleX(0.93);transform-origin:100% 0;">1</div>
<svg style="position:absolute;left:494.90px;top:350.23px" width="9" height="9"><rect x="0" y="0" width="8.6" height="9" rx="1.6" fill="#6b6b6b"/><path d="M1.8 4.6 L3.6 6.7 L7 2.2" fill="none" stroke="#fff" stroke-width="1.7"/></svg>
<svg style="position:absolute;left:524.60px;top:350.23px" width="9" height="9"><rect x="0" y="0" width="8.6" height="9" rx="1.6" fill="#6b6b6b"/><path d="M1.8 4.6 L3.6 6.7 L7 2.2" fill="none" stroke="#fff" stroke-width="1.7"/></svg>
<svg style="position:absolute;left:554.30px;top:350.23px" width="9" height="9"><rect x="0" y="0" width="8.6" height="9" rx="1.6" fill="#6b6b6b"/><path d="M1.8 4.6 L3.6 6.7 L7 2.2" fill="none" stroke="#fff" stroke-width="1.7"/></svg>
<svg style="position:absolute;left:584.00px;top:350.23px" width="9" height="9"><rect x="0" y="0" width="8.6" height="9" rx="1.6" fill="#6b6b6b"/><path d="M1.8 4.6 L3.6 6.7 L7 2.2" fill="none" stroke="#fff" stroke-width="1.7"/></svg>
<svg style="position:absolute;left:614.20px;top:350.23px" width="9" height="9"><rect x="0.5" y="0.5" width="7.8" height="8" rx="1.8" fill="#fff" stroke="#8e8e8e" stroke-width="1"/></svg>
<svg style="position:absolute;left:644.00px;top:350.23px" width="9" height="9"><rect x="0.5" y="0.5" width="7.8" height="8" rx="1.8" fill="#fff" stroke="#8e8e8e" stroke-width="1"/></svg>
<div style="position:absolute;left:7.80px;top:364.93px;font:400 10px/12px 'Liberation Sans', sans-serif;color:#222;white-space:nowrap;transform:scaleX(0.95);transform-origin:0 0;">X</div>
<svg width="7" height="5" viewBox="0 0 7 5" style="position:absolute;left:104.00px;top:367.70px"><path d="M0.7 0.8 L3.5 3.8 L6.3 0.8" fill="none" stroke="#111" stroke-width="1.6"/></svg>
<svg width="7" height="5" viewBox="0 0 7 5" style="position:absolute;left:198.30px;top:367.70px"><path d="M0.7 0.8 L3.5 3.8 L6.3 0.8" fill="none" stroke="#111" stroke-width="1.6"/></svg>
<div style="position:absolute;right:463.10px;top:364.93px;font:400 10px/12px 'Liberation Sans', sans-serif;color:#222;white-space:nowrap;transform:scaleX(0.93);transform-origin:100% 0;">0</div>
<div style="position:absolute;right:402.70px;top:364.93px;font:400 10px/12px 'Liberation Sans', sans-serif;color:#222;white-space:nowrap;transform:scaleX(0.93);transform-origin:100% 0;">0</div>
<div style="position:absolute;right:341.70px;top:364.93px;font:400 10px/12px 'Liberation Sans', sans-serif;color:#222;white-space:nowrap;transform:scaleX(0.93);transform-origin:100% 0;">0.00</div>
<div style="position:absolute;left:396.00px;top:364.93px;font:400 10px/12px 'Liberation Sans', sans-serif;color:#222;white-space:nowrap;transform:scaleX(0.93);transform-origin:0 0;">Normal</div>
<svg width="7" height="5" viewBox="0 0 7 5" style="position:absolute;left:472.00px;top:367.70px"><path d="M0.7 0.8 L3.5 3.8 L6.3 0.8" fill="none" stroke="#111" stroke-width="1.6"/></svg>
<div style="position:absolute;right:18.30px;top:364.93px;font:400 10px/12px 'Liberation Sans', sans-serif;color:#222;white-space:nowrap;transform:scaleX(0.93);transform-origin:100% 0;">1</div>
<svg style="position:absolute;left:494.90px;top:364.60px" width="9" height="9"><rect x="0" y="0" width="8.6" height="9" rx="1.6" fill="#6b6b6b"/><path d="M1.8 4.6 L3.6 6.7 L7 2.2" fill="none" stroke="#fff" stroke-width="1.7"/></svg>
<svg style="position:absolute;left:524.60px;top:364.60px" width="9" height="9"><rect x="0" y="0" width="8.6" height="9" rx="1.6" fill="#6b6b6b"/><path d="M1.8 4.6 L3.6 6.7 L7 2.2" fill="none" stroke="#fff" stroke-width="1.7"/></svg>
<svg style="position:absolute;left:554.30px;top:364.60px" width="9" height="9"><rect x="0" y="0" width="8.6" height="9" rx="1.6" fill="#6b6b6b"/><path d="M1.8 4.6 L3.6 6.7 L7 2.2" fill="none" stroke="#fff" stroke-width="1.7"/></svg>
<svg style="position:absolute;left:584.00px;top:364.60px" width="9" height="9"><rect x="0" y="0" width="8.6" height="9" rx="1.6" fill="#6b6b6b"/><path d="M1.8 4.6 L3.6 6.7 L7 2.2" fill="none" stroke="#fff" stroke-width="1.7"/></svg>
<svg style="position:absolute;left:614.20px;top:364.60px" width="9" height="9"><rect x="0.5" y="0.5" width="7.8" height="8" rx="1.8" fill="#fff" stroke="#8e8e8e" stroke-width="1"/></svg>
<svg style="position:absolute;left:644.00px;top:364.60px" width="9" height="9"><rect x="0.5" y="0.5" width="7.8" height="8" rx="1.8" fill="#fff" stroke="#8e8e8e" stroke-width="1"/></svg>
<div style="position:absolute;left:7.80px;top:379.31px;font:400 10px/12px 'Liberation Sans', sans-serif;color:#222;white-space:nowrap;transform:scaleX(0.95);transform-origin:0 0;">X</div>
<svg width="7" height="5" viewBox="0 0 7 5" style="position:absolute;left:104.00px;top:382.07px"><path d="M0.7 0.8 L3.5 3.8 L6.3 0.8" fill="none" stroke="#111" stroke-width="1.6"/></svg>
<svg width="7" height="5" viewBox="0 0 7 5" style="position:absolute;left:198.30px;top:382.07px"><path d="M0.7 0.8 L3.5 3.8 L6.3 0.8" fill="none" stroke="#111" stroke-width="1.6"/></svg>
<div style="position:absolute;right:463.10px;top:379.31px;font:400 10px/12px 'Liberation Sans', sans-serif;color:#222;white-space:nowrap;transform:scaleX(0.93);transform-origin:100% 0;">0</div>
<div style="position:absolute;right:402.70px;top:379.31px;font:400 10px/12px 'Liberation Sans', sans-serif;color:#222;white-space:nowrap;transform:scaleX(0.93);transform-origin:100% 0;">0</div>
<div style="position:absolute;right:341.70px;top:379.31px;font:400 10px/12px 'Liberation Sans', sans-serif;color:#222;white-space:nowrap;transform:scaleX(0.93);transform-origin:100% 0;">0.00</div>
<div style="position:absolute;left:396.00px;top:379.31px;font:400 10px/12px 'Liberation Sans', sans-serif;color:#222;white-space:nowrap;transform:scaleX(0.93);transform-origin:0 0;">Normal</div>
<svg width="7" height="5" viewBox="0 0 7 5" style="position:absolute;left:472.00px;top:382.07px"><path d="M0.7 0.8 L3.5 3.8 L6.3 0.8" fill="none" stroke="#111" stroke-width="1.6"/></svg>
<div style="position:absolute;right:18.30px;top:379.31px;font:400 10px/12px 'Liberation Sans', sans-serif;color:#222;white-space:nowrap;transform:scaleX(0.93);transform-origin:100% 0;">1</div>
<svg style="position:absolute;left:494.90px;top:378.98px" width="9" height="9"><rect x="0" y="0" width="8.6" height="9" rx="1.6" fill="#6b6b6b"/><path d="M1.8 4.6 L3.6 6.7 L7 2.2" fill="none" stroke="#fff" stroke-width="1.7"/></svg>
<svg style="position:absolute;left:524.60px;top:378.98px" width="9" height="9"><rect x="0" y="0" width="8.6" height="9" rx="1.6" fill="#6b6b6b"/><path d="M1.8 4.6 L3.6 6.7 L7 2.2" fill="none" stroke="#fff" stroke-width="1.7"/></svg>
<svg style="position:absolute;left:554.30px;top:378.98px" width="9" height="9"><rect x="0" y="0" width="8.6" height="9" rx="1.6" fill="#6b6b6b"/><path d="M1.8 4.6 L3.6 6.7 L7 2.2" fill="none" stroke="#fff" stroke-width="1.7"/></svg>
<svg style="position:absolute;left:584.00px;top:378.98px" width="9" height="9"><rect x="0" y="0" width="8.6" height="9" rx="1.6" fill="#6b6b6b"/><path d="M1.8 4.6 L3.6 6.7 L7 2.2" fill="none" stroke="#fff" stroke-width="1.7"/></svg>
<svg style="position:absolute;left:614.20px;top:378.98px" width="9" height="9"><rect x="0.5" y="0.5" width="7.8" height="8" rx="1.8" fill="#fff" stroke="#8e8e8e" stroke-width="1"/></svg>
<svg style="position:absolute;left:644.00px;top:378.98px" width="9" height="9"><rect x="0.5" y="0.5" width="7.8" height="8" rx="1.8" fill="#fff" stroke="#8e8e8e" stroke-width="1"/></svg>
<div style="position:absolute;left:7.80px;top:393.68px;font:400 10px/12px 'Liberation Sans', sans-serif;color:#222;white-space:nowrap;transform:scaleX(0.95);transform-origin:0 0;">X</div>
<svg width="7" height="5" viewBox="0 0 7 5" style="position:absolute;left:104.00px;top:396.45px"><path d="M0.7 0.8 L3.5 3.8 L6.3 0.8" fill="none" stroke="#111" stroke-width="1.6"/></svg>
<svg width="7" height="5" viewBox="0 0 7 5" style="position:absolute;left:198.30px;top:396.45px"><path d="M0.7 0.8 L3.5 3.8 L6.3 0.8" fill="none" stroke="#111" stroke-width="1.6"/></svg>
<div style="position:absolute;right:463.10px;top:393.68px;font:400 10px/12px 'Liberation Sans', sans-serif;color:#222;white-space:nowrap;transform:scaleX(0.93);transform-origin:100% 0;">0</div>
<div style="position:absolute;right:402.70px;top:393.68px;font:400 10px/12px 'Liberation Sans', sans-serif;color:#222;white-space:nowrap;transform:scaleX(0.93);transform-origin:100% 0;">0</div>
<div style="position:absolute;right:341.70px;top:393.68px;font:400 10px/12px 'Liberation Sans', sans-serif;color:#222;white-space:nowrap;transform:scaleX(0.93);transform-origin:100% 0;">0.00</div>
<div style="position:absolute;left:396.00px;top:393.68px;font:400 10px/12px 'Liberation Sans', sans-serif;color:#222;white-space:nowrap;transform:scaleX(0.93);transform-origin:0 0;">Normal</div>
<svg width="7" height="5" viewBox="0 0 7 5" style="position:absolute;left:472.00px;top:396.45px"><path d="M0.7 0.8 L3.5 3.8 L6.3 0.8" fill="none" stroke="#111" stroke-width="1.6"/></svg>
<div style="position:absolute;right:18.30px;top:393.68px;font:400 10px/12px 'Liberation Sans', sans-serif;color:#222;white-space:nowrap;transform:scaleX(0.93);transform-origin:100% 0;">1</div>
<svg style="position:absolute;left:494.90px;top:393.35px" width="9" height="9"><rect x="0" y="0" width="8.6" height="9" rx="1.6" fill="#6b6b6b"/><path d="M1.8 4.6 L3.6 6.7 L7 2.2" fill="none" stroke="#fff" stroke-width="1.7"/></svg>
<svg style="position:absolute;left:524.60px;top:393.35px" width="9" height="9"><rect x="0" y="0" width="8.6" height="9" rx="1.6" fill="#6b6b6b"/><path d="M1.8 4.6 L3.6 6.7 L7 2.2" fill="none" stroke="#fff" stroke-width="1.7"/></svg>
<svg style="position:absolute;left:554.30px;top:393.35px" width="9" height="9"><rect x="0" y="0" width="8.6" height="9" rx="1.6" fill="#6b6b6b"/><path d="M1.8 4.6 L3.6 6.7 L7 2.2" fill="none" stroke="#fff" stroke-width="1.7"/></svg>
<svg style="position:absolute;left:584.00px;top:393.35px" width="9" height="9"><rect x="0" y="0" width="8.6" height="9" rx="1.6" fill="#6b6b6b"/><path d="M1.8 4.6 L3.6 6.7 L7 2.2" fill="none" stroke="#fff" stroke-width="1.7"/></svg>
<svg style="position:absolute;left:614.20px;top:393.35px" width="9" height="9"><rect x="0.5" y="0.5" width="7.8" height="8" rx="1.8" fill="#fff" stroke="#8e8e8e" stroke-width="1"/></svg>
<svg style="position:absolute;left:644.00px;top:393.35px" width="9" height="9"><rect x="0.5" y="0.5" width="7.8" height="8" rx="1.8" fill="#fff" stroke="#8e8e8e" stroke-width="1"/></svg>
<div style="position:absolute;left:7.80px;top:408.06px;font:400 10px/12px 'Liberation Sans', sans-serif;color:#222;white-space:nowrap;transform:scaleX(0.95);transform-origin:0 0;">X</div>
<svg width="7" height="5" viewBox="0 0 7 5" style="position:absolute;left:104.00px;top:410.82px"><path d="M0.7 0.8 L3.5 3.8 L6.3 0.8" fill="none" stroke="#111" stroke-width="1.6"/></svg>
<svg width="7" height="5" viewBox="0 0 7 5" style="position:absolute;left:198.30px;top:410.82px"><path d="M0.7 0.8 L3.5 3.8 L6.3 0.8" fill="none" stroke="#111" stroke-width="1.6"/></svg>
<div style="position:absolute;right:463.10px;top:408.06px;font:400 10px/12px 'Liberation Sans', sans-serif;color:#222;white-space:nowrap;transform:scaleX(0.93);transform-origin:100% 0;">0</div>
<div style="position:absolute;right:402.70px;top:408.06px;font:400 10px/12px 'Liberation Sans', sans-serif;color:#222;white-space:nowrap;transform:scaleX(0.93);transform-origin:100% 0;">0</div>
<div style="position:absolute;right:341.70px;top:408.06px;font:400 10px/12px 'Liberation Sans', sans-serif;color:#222;white-space:nowrap;transform:scaleX(0.93);transform-origin:100% 0;">0.00</div>
<div style="position:absolute;left:396.00px;top:408.06px;font:400 10px/12px 'Liberation Sans', sans-serif;color:#222;white-space:nowrap;transform:scaleX(0.93);transform-origin:0 0;">Normal</div>
<svg width="7" height="5" viewBox="0 0 7 5" style="position:absolute;left:472.00px;top:410.82px"><path d="M0.7 0.8 L3.5 3.8 L6.3 0.8" fill="none" stroke="#111" stroke-width="1.6"/></svg>
<div style="position:absolute;right:18.30px;top:408.06px;font:400 10px/12px 'Liberation Sans', sans-serif;color:#222;white-space:nowrap;transform:scaleX(0.93);transform-origin:100% 0;">1</div>
<svg style="position:absolute;left:494.90px;top:407.73px" width="9" height="9"><rect x="0" y="0" width="8.6" height="9" rx="1.6" fill="#6b6b6b"/><path d="M1.8 4.6 L3.6 6.7 L7 2.2" fill="none" stroke="#fff" stroke-width="1.7"/></svg>
<svg style="position:absolute;left:524.60px;top:407.73px" width="9" height="9"><rect x="0" y="0" width="8.6" height="9" rx="1.6" fill="#6b6b6b"/><path d="M1.8 4.6 L3.6 6.7 L7 2.2" fill="none" stroke="#fff" stroke-width="1.7"/></svg>
<svg style="position:absolute;left:554.30px;top:407.73px" width="9" height="9"><rect x="0" y="0" width="8.6" height="9" rx="1.6" fill="#6b6b6b"/><path d="M1.8 4.6 L3.6 6.7 L7 2.2" fill="none" stroke="#fff" stroke-width="1.7"/></svg>
<svg style="position:absolute;left:584.00px;top:407.73px" width="9" height="9"><rect x="0" y="0" width="8.6" height="9" rx="1.6" fill="#6b6b6b"/><path d="M1.8 4.6 L3.6 6.7 L7 2.2" fill="none" stroke="#fff" stroke-width="1.7"/></svg>
<svg style="position:absolute;left:614.20px;top:407.73px" width="9" height="9"><rect x="0.5" y="0.5" width="7.8" height="8" rx="1.8" fill="#fff" stroke="#8e8e8e" stroke-width="1"/></svg>
<svg style="position:absolute;left:644.00px;top:407.73px" width="9" height="9"><rect x="0.5" y="0.5" width="7.8" height="8" rx="1.8" fill="#fff" stroke="#8e8e8e" stroke-width="1"/></svg>
<div style="position:absolute;left:7.80px;top:422.43px;font:400 10px/12px 'Liberation Sans', sans-serif;color:#222;white-space:nowrap;transform:scaleX(0.95);transform-origin:0 0;">X</div>
<svg width="7" height="5" viewBox="0 0 7 5" style="position:absolute;left:104.00px;top:425.20px"><path d="M0.7 0.8 L3.5 3.8 L6.3 0.8" fill="none" stroke="#111" stroke-width="1.6"/></svg>
<svg width="7" height="5" viewBox="0 0 7 5" style="position:absolute;left:198.30px;top:425.20px"><path d="M0.7 0.8 L3.5 3.8 L6.3 0.8" fill="none" stroke="#111" stroke-width="1.6"/></svg>
<div style="position:absolute;right:463.10px;top:422.43px;font:400 10px/12px 'Liberation Sans', sans-serif;color:#222;white-space:nowrap;transform:scaleX(0.93);transform-origin:100% 0;">0</div>
<div style="position:absolute;right:402.70px;top:422.43px;font:400 10px/12px 'Liberation Sans', sans-serif;color:#222;white-space:nowrap;transform:scaleX(0.93);transform-origin:100% 0;">0</div>
<div style="position:absolute;right:341.70px;top:422.43px;font:400 10px/12px 'Liberation Sans', sans-serif;color:#222;white-space:nowrap;transform:scaleX(0.93);transform-origin:100% 0;">0.00</div>
<div style="position:absolute;left:396.00px;top:422.43px;font:400 10px/12px 'Liberation Sans', sans-serif;color:#222;white-space:nowrap;transform:scaleX(0.93);transform-origin:0 0;">Normal</div>
<svg width="7" height="5" viewBox="0 0 7 5" style="position:absolute;left:472.00px;top:425.20px"><path d="M0.7 0.8 L3.5 3.8 L6.3 0.8" fill="none" stroke="#111" stroke-width="1.6"/></svg>
<div style="position:absolute;right:18.30px;top:422.43px;font:400 10px/12px 'Liberation Sans', sans-serif;color:#222;white-space:nowrap;transform:scaleX(0.93);transform-origin:100% 0;">1</div>
<svg style="position:absolute;left:494.90px;top:422.10px" width="9" height="9"><rect x="0" y="0" width="8.6" height="9" rx="1.6" fill="#6b6b6b"/><path d="M1.8 4.6 L3.6 6.7 L7 2.2" fill="none" stroke="#fff" stroke-width="1.7"/></svg>
<svg style="position:absolute;left:524.60px;top:422.10px" width="9" height="9"><rect x="0" y="0" width="8.6" height="9" rx="1.6" fill="#6b6b6b"/><path d="M1.8 4.6 L3.6 6.7 L7 2.2" fill="none" stroke="#fff" stroke-width="1.7"/></svg>
<svg style="position:absolute;left:554.30px;top:422.10px" width="9" height="9"><rect x="0" y="0" width="8.6" height="9" rx="1.6" fill="#6b6b6b"/><path d="M1.8 4.6 L3.6 6.7 L7 2.2" fill="none" stroke="#fff" stroke-width="1.7"/></svg>
<svg style="position:absolute;left:584.00px;top:422.10px" width="9" height="9"><rect x="0" y="0" width="8.6" height="9" rx="1.6" fill="#6b6b6b"/><path d="M1.8 4.6 L3.6 6.7 L7 2.2" fill="none" stroke="#fff" stroke-width="1.7"/></svg>
<svg style="position:absolute;left:614.20px;top:422.10px" width="9" height="9"><rect x="0.5" y="0.5" width="7.8" height="8" rx="1.8" fill="#fff" stroke="#8e8e8e" stroke-width="1"/></svg>
<svg style="position:absolute;left:644.00px;top:422.10px" width="9" height="9"><rect x="0.5" y="0.5" width="7.8" height="8" rx="1.8" fill="#fff" stroke="#8e8e8e" stroke-width="1"/></svg>
<div style="position:absolute;left:7.80px;top:436.81px;font:400 10px/12px 'Liberation Sans', sans-serif;color:#222;white-space:nowrap;transform:scaleX(0.95);transform-origin:0 0;">X</div>
<svg width="7" height="5" viewBox="0 0 7 5" style="position:absolute;left:104.00px;top:439.57px"><path d="M0.7 0.8 L3.5 3.8 L6.3 0.8" fill="none" stroke="#111" stroke-width="1.6"/></svg>
<svg width="7" height="5" viewBox="0 0 7 5" style="position:absolute;left:198.30px;top:439.57px"><path d="M0.7 0.8 L3.5 3.8 L6.3 0.8" fill="none" stroke="#111" stroke-width="1.6"/></svg>
<div style="position:absolute;right:463.10px;top:436.81px;font:400 10px/12px 'Liberation Sans', sans-serif;color:#222;white-space:nowrap;transform:scaleX(0.93);transform-origin:100% 0;">0</div>
<div style="position:absolute;right:402.70px;top:436.81px;font:400 10px/12px 'Liberation Sans', sans-serif;color:#222;white-space:nowrap;transform:scaleX(0.93);transform-origin:100% 0;">0</div>
<div style="position:absolute;right:341.70px;top:436.81px;font:400 10px/12px 'Liberation Sans', sans-serif;color:#222;white-space:nowrap;transform:scaleX(0.93);transform-origin:100% 0;">0.00</div>
<div style="position:absolute;left:396.00px;top:436.81px;font:400 10px/12px 'Liberation Sans', sans-serif;color:#222;white-space:nowrap;transform:scaleX(0.93);transform-origin:0 0;">Normal</div>
<svg width="7" height="5" viewBox="0 0 7 5" style="position:absolute;left:472.00px;top:439.57px"><path d="M0.7 0.8 L3.5 3.8 L6.3 0.8" fill="none" stroke="#111" stroke-width="1.6"/></svg>
<div style="position:absolute;right:18.30px;top:436.81px;font:400 10px/12px 'Liberation Sans', sans-serif;color:#222;white-space:nowrap;transform:scaleX(0.93);transform-origin:100% 0;">1</div>
<svg style="position:absolute;left:494.90px;top:436.48px" width="9" height="9"><rect x="0" y="0" width="8.6" height="9" rx="1.6" fill="#6b6b6b"/><path d="M1.8 4.6 L3.6 6.7 L7 2.2" fill="none" stroke="#fff" stroke-width="1.7"/></svg>
<svg style="position:absolute;left:524.60px;top:436.48px" width="9" height="9"><rect x="0" y="0" width="8.6" height="9" rx="1.6" fill="#6b6b6b"/><path d="M1.8 4.6 L3.6 6.7 L7 2.2" fill="none" stroke="#fff" stroke-width="1.7"/></svg>
<svg style="position:absolute;left:554.30px;top:436.48px" width="9" height="9"><rect x="0" y="0" width="8.6" height="9" rx="1.6" fill="#6b6b6b"/><path d="M1.8 4.6 L3.6 6.7 L7 2.2" fill="none" stroke="#fff" stroke-width="1.7"/></svg>
<svg style="position:absolute;left:584.00px;top:436.48px" width="9" height="9"><rect x="0" y="0" width="8.6" height="9" rx="1.6" fill="#6b6b6b"/><path d="M1.8 4.6 L3.6 6.7 L7 2.2" fill="none" stroke="#fff" stroke-width="1.7"/></svg>
<svg style="position:absolute;left:614.20px;top:436.48px" width="9" height="9"><rect x="0.5" y="0.5" width="7.8" height="8" rx="1.8" fill="#fff" stroke="#8e8e8e" stroke-width="1"/></svg>
<svg style="position:absolute;left:644.00px;top:436.48px" width="9" height="9"><rect x="0.5" y="0.5" width="7.8" height="8" rx="1.8" fill="#fff" stroke="#8e8e8e" stroke-width="1"/></svg>
<div style="position:absolute;left:7.80px;top:451.18px;font:400 10px/12px 'Liberation Sans', sans-serif;color:#222;white-space:nowrap;transform:scaleX(0.95);transform-origin:0 0;">X</div>
<svg width="7" height="5" viewBox="0 0 7 5" style="position:absolute;left:104.00px;top:453.95px"><path d="M0.7 0.8 L3.5 3.8 L6.3 0.8" fill="none" stroke="#111" stroke-width="1.6"/></svg>
<svg width="7" height="5" viewBox="0 0 7 5" style="position:absolute;left:198.30px;top:453.95px"><path d="M0.7 0.8 L3.5 3.8 L6.3 0.8" fill="none" stroke="#111" stroke-width="1.6"/></svg>
<div style="position:absolute;right:463.10px;top:451.18px;font:400 10px/12px 'Liberation Sans', sans-serif;color:#222;white-space:nowrap;transform:scaleX(0.93);transform-origin:100% 0;">0</div>
<div style="position:absolute;right:402.70px;top:451.18px;font:400 10px/12px 'Liberation Sans', sans-serif;color:#222;white-space:nowrap;transform:scaleX(0.93);transform-origin:100% 0;">0</div>
<div style="position:absolute;right:341.70px;top:451.18px;font:400 10px/12px 'Liberation Sans', sans-serif;color:#222;white-space:nowrap;transform:scaleX(0.93);transform-origin:100% 0;">0.00</div>
<div style="position:absolute;left:396.00px;top:451.18px;font:400 10px/12px 'Liberation Sans', sans-serif;color:#222;white-space:nowrap;transform:scaleX(0.93);transform-origin:0 0;">Normal</div>
<svg width="7" height="5" viewBox="0 0 7 5" style="position:absolute;left:472.00px;top:453.95px"><path d="M0.7 0.8 L3.5 3.8 L6.3 0.8" fill="none" stroke="#111" stroke-width="1.6"/></svg>
<div style="position:absolute;right:18.30px;top:451.18px;font:400 10px/12px 'Liberation Sans', sans-serif;color:#222;white-space:nowrap;transform:scaleX(0.93);transform-origin:100% 0;">1</div>
<svg style="position:absolute;left:494.90px;top:450.85px" width="9" height="9"><rect x="0" y="0" width="8.6" height="9" rx="1.6" fill="#6b6b6b"/><path d="M1.8 4.6 L3.6 6.7 L7 2.2" fill="none" stroke="#fff" stroke-width="1.7"/></svg>
<svg style="position:absolute;left:524.60px;top:450.85px" width="9" height="9"><rect x="0" y="0" width="8.6" height="9" rx="1.6" fill="#6b6b6b"/><path d="M1.8 4.6 L3.6 6.7 L7 2.2" fill="none" stroke="#fff" stroke-width="1.7"/></svg>
<svg style="position:absolute;left:554.30px;top:450.85px" width="9" height="9"><rect x="0" y="0" width="8.6" height="9" rx="1.6" fill="#6b6b6b"/><path d="M1.8 4.6 L3.6 6.7 L7 2.2" fill="none" stroke="#fff" stroke-width="1.7"/></svg>
<svg style="position:absolute;left:584.00px;top:450.85px" width="9" height="9"><rect x="0" y="0" width="8.6" height="9" rx="1.6" fill="#6b6b6b"/><path d="M1.8 4.6 L3.6 6.7 L7 2.2" fill="none" stroke="#fff" stroke-width="1.7"/></svg>
<svg style="position:absolute;left:614.20px;top:450.85px" width="9" height="9"><rect x="0.5" y="0.5" width="7.8" height="8" rx="1.8" fill="#fff" stroke="#8e8e8e" stroke-width="1"/></svg>
<svg style="position:absolute;left:644.00px;top:450.85px" width="9" height="9"><rect x="0.5" y="0.5" width="7.8" height="8" rx="1.8" fill="#fff" stroke="#8e8e8e" stroke-width="1"/></svg>
<div style="position:absolute;left:7.80px;top:465.56px;font:400 10px/12px 'Liberation Sans', sans-serif;color:#222;white-space:nowrap;transform:scaleX(0.95);transform-origin:0 0;">X</div>
<svg width="7" height="5" viewBox="0 0 7 5" style="position:absolute;left:104.00px;top:468.32px"><path d="M0.7 0.8 L3.5 3.8 L6.3 0.8" fill="none" stroke="#111" stroke-width="1.6"/></svg>
<svg width="7" height="5" viewBox="0 0 7 5" style="position:absolute;left:198.30px;top:468.32px"><path d="M0.7 0.8 L3.5 3.8 L6.3 0.8" fill="none" stroke="#111" stroke-width="1.6"/></svg>
<div style="position:absolute;right:463.10px;top:465.56px;font:400 10px/12px 'Liberation Sans', sans-serif;color:#222;white-space:nowrap;transform:scaleX(0.93);transform-origin:100% 0;">0</div>
<div style="position:absolute;right:402.70px;top:465.56px;font:400 10px/12px 'Liberation Sans', sans-serif;color:#222;white-space:nowrap;transform:scaleX(0.93);transform-origin:100% 0;">0</div>
<div style="position:absolute;right:341.70px;top:465.56px;font:400 10px/12px 'Liberation Sans', sans-serif;color:#222;white-space:nowrap;transform:scaleX(0.93);transform-origin:100% 0;">0.00</div>
<div style="position:absolute;left:396.00px;top:465.56px;font:400 10px/12px 'Liberation Sans', sans-serif;color:#222;white-space:nowrap;transform:scaleX(0.93);transform-origin:0 0;">Normal</div>
<svg width="7" height="5" viewBox="0 0 7 5" style="position:absolute;left:472.00px;top:468.32px"><path d="M0.7 0.8 L3.5 3.8 L6.3 0.8" fill="none" stroke="#111" stroke-width="1.6"/></svg>
<div style="position:absolute;right:18.30px;top:465.56px;font:400 10px/12px 'Liberation Sans', sans-serif;color:#222;white-space:nowrap;transform:scaleX(0.93);transform-origin:100% 0;">1</div>
<svg style="position:absolute;left:494.90px;top:465.23px" width="9" height="9"><rect x="0" y="0" width="8.6" height="9" rx="1.6" fill="#6b6b6b"/><path d="M1.8 4.6 L3.6 6.7 L7 2.2" fill="none" stroke="#fff" stroke-width="1.7"/></svg>
<svg style="position:absolute;left:524.60px;top:465.23px" width="9" height="9"><rect x="0" y="0" width="8.6" height="9" rx="1.6" fill="#6b6b6b"/><path d="M1.8 4.6 L3.6 6.7 L7 2.2" fill="none" stroke="#fff" stroke-width="1.7"/></svg>
<svg style="position:absolute;left:554.30px;top:465.23px" width="9" height="9"><rect x="0" y="0" width="8.6" height="9" rx="1.6" fill="#6b6b6b"/><path d="M1.8 4.6 L3.6 6.7 L7 2.2" fill="none" stroke="#fff" stroke-width="1.7"/></svg>
<svg style="position:absolute;left:584.00px;top:465.23px" width="9" height="9"><rect x="0" y="0" width="8.6" height="9" rx="1.6" fill="#6b6b6b"/><path d="M1.8 4.6 L3.6 6.7 L7 2.2" fill="none" stroke="#fff" stroke-width="1.7"/></svg>
<svg style="position:absolute;left:614.20px;top:465.23px" width="9" height="9"><rect x="0.5" y="0.5" width="7.8" height="8" rx="1.8" fill="#fff" stroke="#8e8e8e" stroke-width="1"/></svg>
<svg style="position:absolute;left:644.00px;top:465.23px" width="9" height="9"><rect x="0.5" y="0.5" width="7.8" height="8" rx="1.8" fill="#fff" stroke="#8e8e8e" stroke-width="1"/></svg>
<svg style="position:absolute;left:0;top:0" width="720" height="495">
<path d="M-10.00,309.00 C-10.00,306.00 -8.33,302.65 0.00,299.80 C8.33,296.95 23.33,294.18 40.00,291.90 C56.67,289.62 80.00,287.58 100.00,286.10 C120.00,284.62 143.33,283.81 160.00,283.00 C176.67,282.19 178.33,281.98 200.00,281.25 C221.67,280.52 256.67,279.09 290.00,278.60 C323.33,278.11 370.50,278.07 400.00,278.30 C429.50,278.53 447.00,279.42 467.00,280.00 C487.00,280.58 504.50,281.22 520.00,281.80 C535.50,282.38 546.67,282.67 560.00,283.50 C573.33,284.33 586.67,285.75 600.00,286.80 C613.33,287.85 628.33,288.73 640.00,289.80 C651.67,290.87 660.00,291.67 670.00,293.20 C680.00,294.73 692.50,296.97 700.00,299.00 C707.50,301.03 711.67,303.58 715.00,305.40 C718.33,307.22 720.00,308.60 720.00,309.90 C720.00,311.20 718.33,312.02 715.00,313.20 C711.67,314.38 706.67,315.66 700.00,317.00 C693.33,318.34 686.67,319.71 675.00,321.25 C663.33,322.79 645.00,324.58 630.00,326.25 C615.00,327.92 600.00,329.86 585.00,331.25 C570.00,332.64 555.83,333.68 540.00,334.60 C524.17,335.52 513.33,335.97 490.00,336.75 C466.67,337.53 433.33,338.94 400.00,339.30 C366.67,339.66 323.33,339.32 290.00,338.90 C256.67,338.48 221.67,337.55 200.00,336.80 C178.33,336.05 176.67,335.53 160.00,334.40 C143.33,333.27 118.33,331.48 100.00,330.00 C81.67,328.52 66.67,327.53 50.00,325.50 C33.33,323.47 10.00,320.55 0.00,317.80 C-10.00,315.05 -10.00,312.00 -10.00,309.00" fill="none" stroke="#e8141c" stroke-width="5.2" stroke-linejoin="round"/>
<polygon points="187.2,176.8 217,176.8 217,209.1 229.6,209.1 230.3,211 202.5,245.5 174.8,211 175.4,209.1 187.2,209.1" fill="#e8141c"/>
<polygon points="191.7,181.3 212.4,181.3 212.4,213.6 222.5,213.6 202.5,238.9 183.1,213.6 191.7,213.6" fill="#fff"/>
<polygon points="421.4,257.1 448,257.1 448,281.9 458.6,281.9 459.2,283.2 434.5,309.6 409.6,283.2 410.2,281.9 421.4,281.9" fill="#e8141c"/>
<polygon points="426.2,261.7 443.2,261.7 443.2,286.5 450.5,286.5 434.5,303.5 418.6,286.5 426.2,286.5" fill="#fff"/>
</svg>
</body></html>
